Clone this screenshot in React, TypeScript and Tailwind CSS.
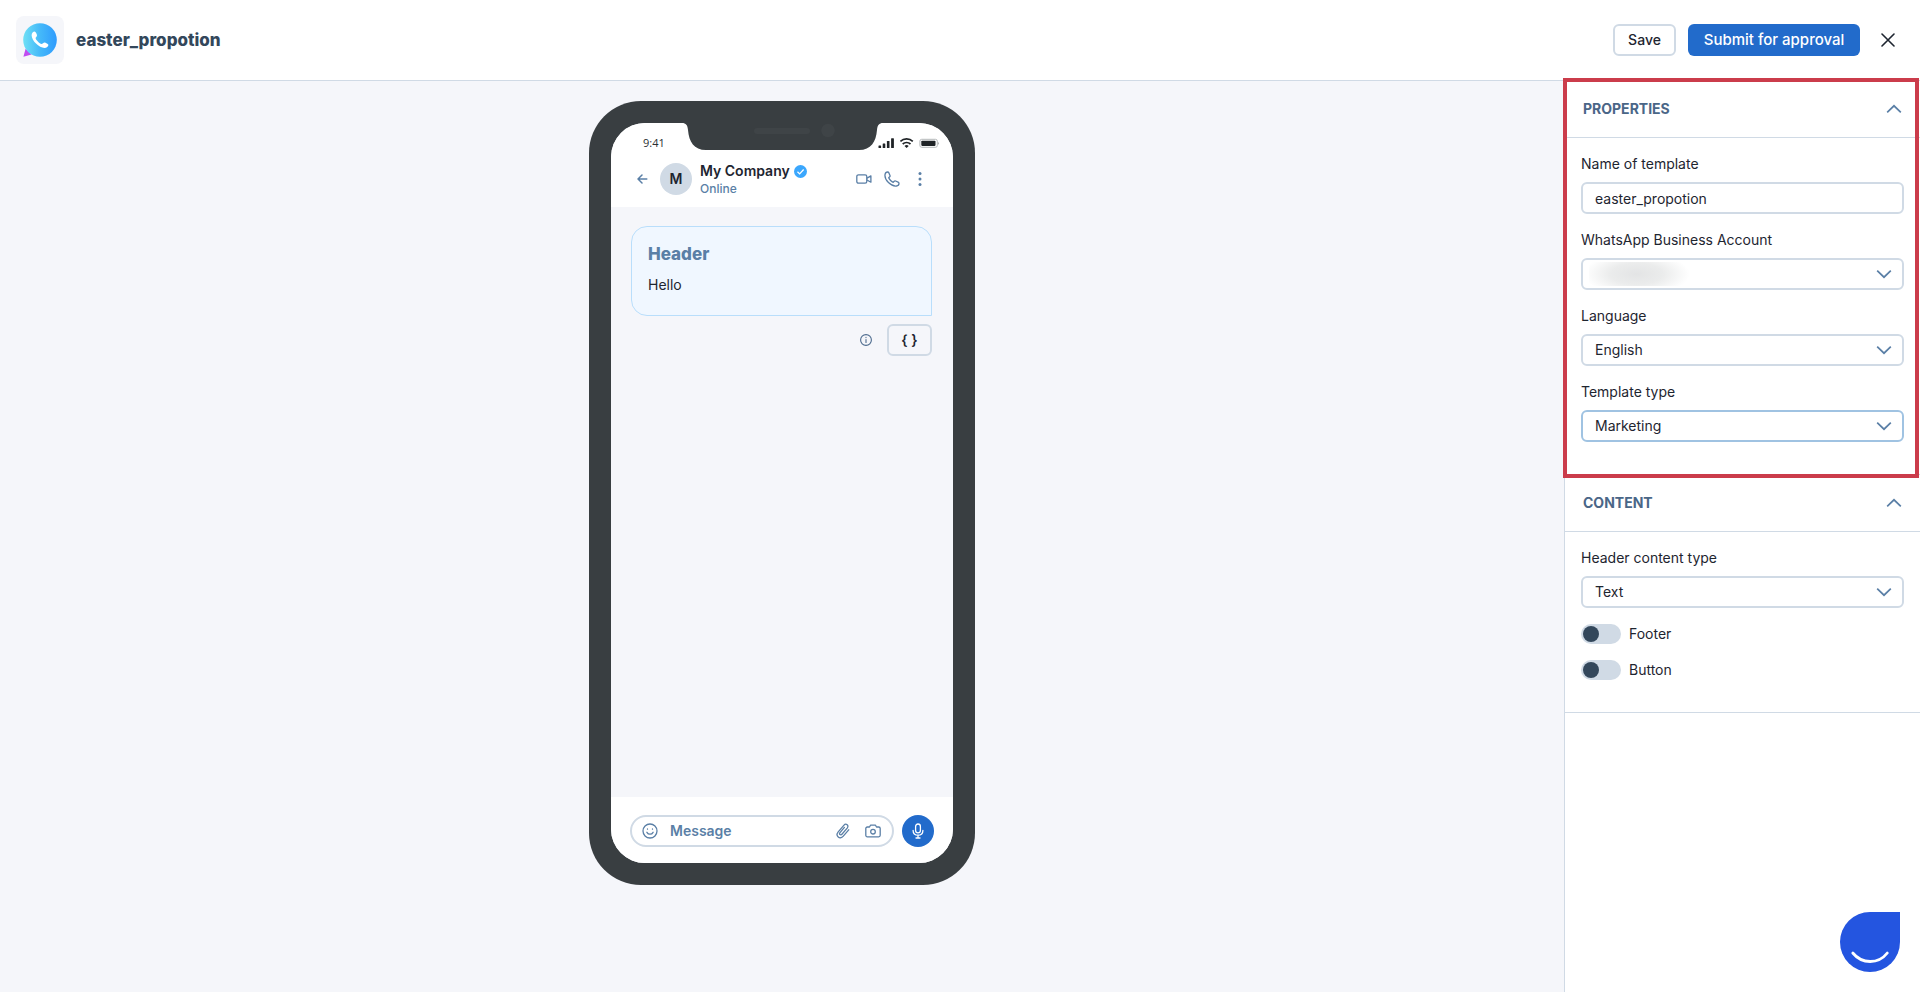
import React, { useState } from "react";

const WhatsAppLogo = () => (
	<svg width="34" height="34" viewBox="0 0 34 34" aria-hidden="true">
		<defs>
			<linearGradient id="logo-blue" x1="0" y1="0.5" x2="1" y2="0.5">
				<stop offset="0" stopColor="#6fe0f5" />
				<stop offset="0.5" stopColor="#45b9f9" />
				<stop offset="1" stopColor="#2f9bfd" />
			</linearGradient>
		</defs>
		<path d="M2.6 25.8 L0.4 33.8 L8.6 31.6 Z" fill="#c04df0" />
		<circle cx="17" cy="17" r="16.8" fill="url(#logo-blue)" />
		<path
			d="M8.6 12.2c0-2 1.6-3.6 3-3.6 1 0 2.4 3 2.4 3.8 0 1-1.4 1.9-1.4 2.7 0 1.7 4 5.9 6 5.9.9 0 1.9-1.6 2.9-1.6.9 0 3.9 1.5 3.9 2.5 0 1.4-1.8 3-3.9 3-5.4 0-12.9-7.3-12.9-12.7z"
			fill="#fff"
		/>
	</svg>
);

const Chevron = ({ up = false }: { up?: boolean }) => (
	<svg
		width="16"
		height="10"
		viewBox="0 0 16 10"
		fill="none"
		stroke="#5a7fa6"
		strokeWidth="1.7"
		aria-hidden="true"
	>
		<path d={up ? "M1.2 8.4 8 1.8l6.8 6.6" : "M1.2 1.6 8 8.2l6.8-6.6"} />
	</svg>
);

const StatusIcons = () => (
	<svg width="62" height="12" viewBox="0 0 62 12" fill="#1f2326" aria-hidden="true">
		<rect x="0.5" y="8.5" width="2.6" height="2.5" rx="0.5" />
		<rect x="4.7" y="6.5" width="2.6" height="4.5" rx="0.5" />
		<rect x="8.9" y="4" width="2.6" height="7" rx="0.5" />
		<rect x="13.1" y="1.2" width="2.8" height="9.8" rx="0.5" />
		<g fill="none" stroke="#1f2326" strokeWidth="1.7">
			<path d="M22.4 4.3a9.2 9.2 0 0 1 12.4 0" />
			<path d="M24.7 7a5.9 5.9 0 0 1 7.8 0" />
		</g>
		<path d="M26.5 8.9a3.2 3.2 0 0 1 4.2 0l-2.1 2.2z" />
		<rect x="41.9" y="2.3" width="17.4" height="8" rx="1.8" fill="none" stroke="#b5b8ba" />
		<rect x="43.3" y="3.7" width="14.2" height="5.2" rx="0.8" />
		<path d="M60.3 4.7q1.3 1.6 0 3.2z" fill="#6d7173" />
	</svg>
);

const iconProps = {
	fill: "none",
	stroke: "currentColor",
	strokeWidth: 1.3,
	strokeLinecap: "round" as const,
	strokeLinejoin: "round" as const,
	"aria-hidden": true,
};

const PhonePreview = () => (
	<div className="flex h-[784px] w-[386px] flex-col rounded-[52px] bg-[#393e41] p-[22px]">
		<div className="relative flex flex-1 flex-col overflow-hidden rounded-[34px] bg-[#f5f6fa]">
			{/* Notch */}
			<svg
				className="absolute top-0 left-[71px]"
				width="202"
				height="27"
				viewBox="0 0 202 27"
				aria-hidden="true"
			>
				<path
					d="M0 0C4 0 5.5 2 6 7C7 19 12 27 24 27H177C189 27 194 19 195 7C195.5 2 197 0 201 0Z"
					fill="#393e41"
				/>
				<rect x="72" y="5" width="56" height="6" rx="3" fill="#3f4447" />
				<circle cx="146" cy="7.5" r="6.8" fill="#3f4447" />
			</svg>

			<div className="bg-white">
				<div className="flex items-center justify-between pt-3 pr-[13px] pl-8">
					<span className="font-['Open_Sans'] text-[11px] leading-4 text-[#2b2f32]">
						9:41
					</span>
					<StatusIcons />
				</div>
				{/* Chat header */}
				<div className="flex h-14 items-center pr-[25px] pl-[26px] text-[#5a7fa6]">
					<button type="button" aria-label="Back">
						<svg width="11" height="10" viewBox="0 0 11 10" {...iconProps} strokeWidth={1.5}>
							<path d="M9.8 5H1M5 1 1 5l4 4" />
						</svg>
					</button>
					<div className="ml-3 flex size-8 items-center justify-center rounded-full bg-[#d0dae5] text-sm font-semibold text-[#1e2530]">
						M
					</div>
					<div className="ml-2 flex-1">
						<div className="flex items-center gap-1">
							<span className="text-sm leading-5 font-semibold text-[#1e2530]">
								My Company
							</span>
							<svg width="13" height="13" viewBox="0 0 12 12" aria-hidden="true">
								<circle cx="6" cy="6" r="6" fill="#3ba7fd" />
								<path
									d="M3.2 6.3 5.2 8.2 8.9 4.2"
									fill="none"
									stroke="#fff"
									strokeWidth="1.2"
								/>
							</svg>
						</div>
						<div className="text-xs leading-4 font-medium">Online</div>
					</div>
					<div className="flex items-center gap-3">
						<button type="button" aria-label="Video call">
							<svg width="16" height="16" viewBox="0 0 16 16" {...iconProps}>
								<rect x="0.8" y="3.8" width="10" height="8.4" rx="1.7" />
								<path d="M11 7.1 14.9 4.9V11.2L11 9" />
							</svg>
						</button>
						<button type="button" aria-label="Call">
							<svg width="16" height="16" viewBox="0 0 16 16" {...iconProps}>
								<path d="M1 3.6C1.3 2 2.6 1 3.6 1c.6 0 1 .3 1.3.9l1.1 2.5c.2.5.1 1-.3 1.4l-1 1c.5 1.5 3 4 4.5 4.5l1-1c.4-.4.9-.5 1.4-.3l2.5 1.1c.6.3.9.7.9 1.3 0 1-1 2.3-2.6 2.6C7 15.6.4 9 1 3.6z" />
							</svg>
						</button>
						<button type="button" aria-label="More options">
							<svg width="16" height="16" viewBox="0 0 16 16" fill="currentColor" aria-hidden="true">
								<circle cx="8" cy="2.5" r="1.5" />
								<circle cx="8" cy="8" r="1.5" />
								<circle cx="8" cy="13.5" r="1.5" />
							</svg>
						</button>
					</div>
				</div>
			</div>

			{/* Message */}
			<div className="flex-1 pt-[19px] pr-[21px] pl-5">
				<div className="h-[90px] rounded-2xl rounded-br-none border border-[#b9defb] bg-[#f0f7ff] px-4 py-[15px]">
					<h2 className="text-[17px] leading-6 font-extrabold text-[#5a7fa6]">Header</h2>
					<p className="mt-[9px] text-sm leading-5 text-[#1e2530]">Hello</p>
				</div>
				<div className="mt-2 flex items-center justify-end gap-[15px] text-[#4d6b8e]">
					<svg width="12" height="12" viewBox="0 0 12 12" {...iconProps} strokeWidth={1.1}>
						<circle cx="6" cy="6" r="5.4" />
						<path d="M6 5.5v3M6 3.4v.2" />
					</svg>
					<button
						type="button"
						className="h-8 w-[45px] rounded-md border-2 border-[#d0dae5] text-sm font-semibold text-[#1e2530]"
					>
						{"{ }"}
					</button>
				</div>
			</div>

			{/* Message bar */}
			<div className="flex h-[66px] items-start gap-2 bg-white px-[19px] pt-[18px]">
				<div className="flex h-8 flex-1 items-center rounded-full border-2 border-[#d0dae5] pr-[11px] pl-2.5 text-[#5a7fa6]">
					<svg width="16" height="16" viewBox="0 0 16 16" {...iconProps}>
						<circle cx="8" cy="8" r="7" />
						<path d="M4.9 9.3c.7 1.2 1.8 1.9 3.1 1.9s2.4-.7 3.1-1.9M5.5 6v.2M10.5 6v.2" />
					</svg>
					<input
						type="text"
						aria-label="Message"
						placeholder="Message"
						className="ml-3 w-0 flex-1 text-sm font-semibold outline-none placeholder:text-[#5a7fa6]"
					/>
					<svg width="16" height="16" viewBox="0 0 16 16" {...iconProps}>
						<path d="M9.4 4.4 5 9.6c-1.3 1.6.6 3.2 1.9 1.7l5.3-6.2c2.2-2.7-1.2-5.4-3.4-2.8L3.2 8.8c-3.3 4 1.7 8.4 5.1 4.4l5.4-6.4" />
					</svg>
					<svg className="ml-[14px]" width="16" height="16" viewBox="0 0 16 16" {...iconProps}>
						<path d="M2.3 4h2.2l1-1.8h5l1 1.8h2.2c.9 0 1.5.6 1.5 1.5v6.8c0 .9-.6 1.5-1.5 1.5H2.3c-.9 0-1.5-.6-1.5-1.5V5.5C.8 4.6 1.4 4 2.3 4z" />
						<circle cx="8" cy="8.7" r="2.3" />
					</svg>
				</div>
				<button
					type="button"
					aria-label="Record voice message"
					className="flex size-8 items-center justify-center rounded-full bg-[#226bcb] text-white"
				>
					<svg width="16" height="16" viewBox="0 0 16 16" {...iconProps}>
						<rect x="5.6" y="1" width="4.8" height="8.8" rx="2.4" />
						<path d="M3.1 7.4c0 2.9 2.1 4.8 4.9 4.8s4.9-1.9 4.9-4.8M8 12.2v2.6M6 15h4" />
					</svg>
				</button>
			</div>
		</div>
	</div>
);

type FieldProps = {
	id: string;
	label: string;
	value: string;
	active?: boolean;
	masked?: boolean;
};

const SelectField = ({ id, label, value, active, masked }: FieldProps) => (
	<div>
		<label htmlFor={id} className="mb-2 block">
			{label}
		</label>
		<div className="relative">
			<select
				id={id}
				className={`block h-8 w-full appearance-none rounded-md border-2 bg-white px-3 ${
					active ? "border-[#a0c3e2]" : "border-[#d0dae5]"
				}`}
			>
				<option>{value}</option>
			</select>
			{/* Account name is masked */}
			{masked && (
				<span className="pointer-events-none absolute top-1 left-2 h-6 w-[106px] bg-[radial-gradient(50%_90%_at_45%_50%,#e3e4e5,#ebecec_50%,#ffffff)]" />
			)}
			<span className="pointer-events-none absolute top-[11px] right-3">
				<Chevron />
			</span>
		</div>
	</div>
);

const Toggle = ({ label }: { label: string }) => (
	<label className="flex h-5 cursor-pointer items-center gap-2">
		<input
			type="checkbox"
			role="switch"
			className="h-5 w-10 appearance-none rounded-full bg-[#d0dae5] p-0.5 before:block before:size-4 before:rounded-full before:bg-[#33475b] checked:bg-[#226bcb] checked:before:ml-5"
		/>
		{label}
	</label>
);

type SectionProps = {
	title: string;
	highlight?: boolean;
	children: React.ReactNode;
};

const Section = ({ title, highlight, children }: SectionProps) => {
	const [open, setOpen] = useState(true);
	return (
		<section className="relative border-b border-[#d0dae5]">
			<button
				type="button"
				onClick={() => setOpen(!open)}
				className="flex h-[57px] w-full items-center justify-between border-b border-[#d0dae5] px-[18px] text-sm font-bold text-[#4a6687]"
			>
				{title}
				<Chevron up={open} />
			</button>
			{open && <div className="flex flex-col gap-4 px-4 pt-4 pb-8">{children}</div>}
			{highlight && (
				<div className="pointer-events-none absolute -top-[3px] right-px -bottom-1 -left-0.5 z-10 border-4 border-[#cb3c4b]" />
			)}
		</section>
	);
};

const App = () => {
	const [name, setName] = useState("easter_propotion");
	return (
		<div className="flex min-h-screen flex-col bg-white font-[Inter,sans-serif] text-[#1e2530]">
			<header className="flex h-[81px] items-center border-b border-[#d0dae5] px-4">
				<div className="flex size-12 items-center justify-center rounded-lg bg-[#f5f6fa]">
					<WhatsAppLogo />
				</div>
				<h1 className="ml-3 flex-1 text-[17px] leading-6 font-extrabold text-[#33475b]">
					{name}
				</h1>
				<div className="flex items-center gap-3">
					<button
						type="button"
						className="h-8 w-[63px] rounded-md border-2 border-[#d0dae5] text-sm font-medium"
					>
						Save
					</button>
					<button
						type="button"
						className="h-8 w-[172px] rounded-md bg-[#226bcb] text-[15px] font-medium text-white"
					>
						Submit for approval
					</button>
					<button
						type="button"
						aria-label="Close"
						className="flex size-8 items-center justify-center"
					>
						<svg width="14" height="14" viewBox="0 0 14 14" {...iconProps} strokeWidth={1.6}>
							<path d="M1 1l12 12M13 1 1 13" />
						</svg>
					</button>
				</div>
			</header>

			<div className="flex flex-1">
				<main className="flex flex-1 items-start justify-center bg-[#f5f6fa] py-5">
					<PhonePreview />
				</main>

				<aside className="w-[356px] border-l border-[#d0dae5] text-sm leading-5">
					<Section title="PROPERTIES" highlight>
						<div>
							<label htmlFor="template-name" className="mb-2 block">
								Name of template
							</label>
							<input
								id="template-name"
								type="text"
								value={name}
								onChange={(e) => setName(e.target.value)}
								className="block h-8 w-full rounded-md border-2 border-[#d0dae5] px-3"
							/>
						</div>
						<SelectField id="account" label="WhatsApp Business Account" value="" masked />
						<SelectField id="language" label="Language" value="English" />
						<SelectField id="template-type" label="Template type" value="Marketing" active />
					</Section>
					<Section title="CONTENT">
						<SelectField id="header-type" label="Header content type" value="Text" />
						<Toggle label="Footer" />
						<Toggle label="Button" />
					</Section>
				</aside>
			</div>

			{/* Chat launcher */}
			<button
				type="button"
				aria-label="Open chat"
				className="fixed right-5 bottom-5 size-[60px] rounded-full rounded-tr-none bg-[#2455e0]"
			>
				<svg width="60" height="60" viewBox="0 0 60 60" aria-hidden="true">
					<path
						d="M12.8 41C22 52.3 38.5 52.3 47.3 41"
						fill="none"
						stroke="#fff"
						strokeWidth="2.8"
						strokeLinecap="round"
					/>
				</svg>
			</button>
		</div>
	);
};

export default App;
